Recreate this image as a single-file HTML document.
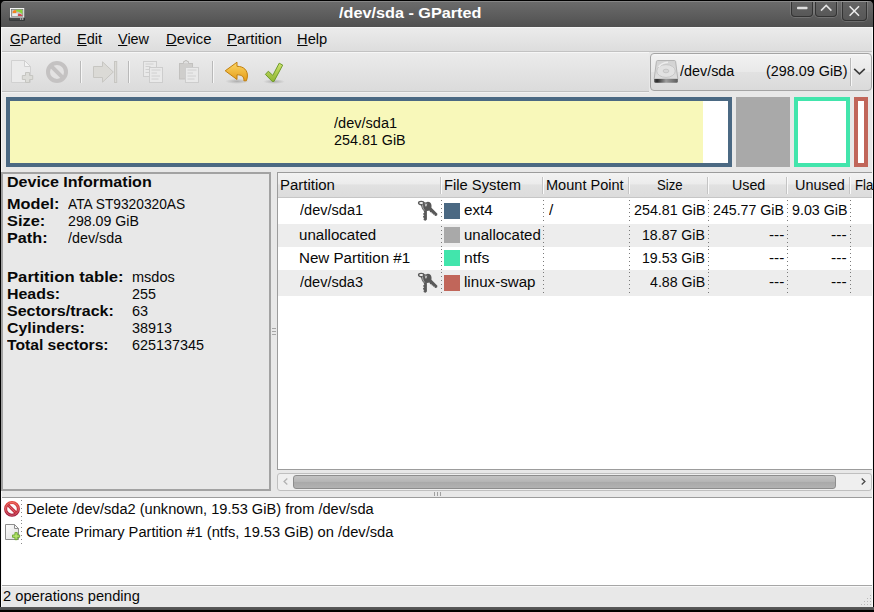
<!DOCTYPE html>
<html><head><meta charset="utf-8"><title>/dev/sda - GParted</title>
<style>
html,body{margin:0;padding:0;background:#000;}
body{width:874px;height:612px;overflow:hidden;font-family:"Liberation Sans",sans-serif;}
#win{position:relative;width:874px;height:612px;overflow:hidden;background:#000;}
#win div,#win span,#win svg{position:absolute;box-sizing:border-box;}
.t{white-space:nowrap;transform-origin:0 0;font-size:14px;line-height:16px;height:16px;color:#080808;}
.t u{text-decoration:underline;text-underline-offset:1px;text-decoration-thickness:1px;}
.b{font-weight:bold;}
#title{left:0;top:0;width:874px;height:27px;border:1px solid #000;border-bottom:0;border-radius:5px 5px 0 0;
 background:linear-gradient(#868686 0,#868686 1px,#6b6b6b 1px,#505050 100%);}
#client{left:1px;top:27px;width:872px;height:580px;background:#e8e8e8;overflow:hidden;}
#bottomframe{left:0;top:607px;width:874px;height:5px;background:linear-gradient(#5a5a5a 0,#4e4e4e 3px,#000 3px,#000 100%);}
#menubar{left:0;top:0;width:872px;height:25px;background:linear-gradient(#f4f4f4 0,#f4f4f4 1px,#ebebeb 1px,#dddddd 100%);border-bottom:1px solid #c2c2c2;}
#toolbar{left:0;top:25px;width:648px;height:40px;background:linear-gradient(#f6f6f6 0,#f6f6f6 1px,#ebebeb 1px,#dbdbdb 100%);border-bottom:1px solid #c0c0c0;box-shadow:0 1px 0 #f2f2f2;}
#combo{left:649px;top:26px;width:222px;height:38px;border:1px solid #a4a4a4;border-radius:4px;background:linear-gradient(#f8f8f8 0,#f1f1f1 2px,#e9e9e9 50%,#e2e2e2 50%,#dadada 100%);}
.sep{width:1px;background:#b9b9b9;box-shadow:1px 0 0 #f6f6f6;}
.pbox{top:70px;height:70px;}
#lpane{left:0;top:145px;width:270px;height:319px;border:2px solid #a2a2a2;border-left-width:2px;background:#e8e8e8;}
#rpane{left:276px;top:145px;width:596px;height:298px;border:1px solid #9c9c9c;border-right:0;background:#fff;}
#hdr{left:0;top:0;width:596px;height:25px;background:linear-gradient(#f3f3f3 0,#ececec 45%,#e1e1e1 50%,#dcdcdc 100%);border-bottom:1px solid #c6c6c6;}
.hsep{top:4px;width:1px;height:17px;background:#c4c4c4;box-shadow:1px 0 0 #fafafa;}
.row{left:0;width:596px;}
.g{background-color:#ededed;}
.sw{width:16px;height:16px;}
#hscroll{left:276px;top:446px;width:595px;height:18px;border:1px solid #bfbfbf;border-radius:3px;background:#efefef;}
#thumb{left:15px;top:1px;width:543px;height:14px;border:1px solid #8d8d8d;border-radius:3px;background:linear-gradient(#c4c4c4,#b4b4b4 50%,#a9a9a9 50%,#b2b2b2);}
#ops{left:0;top:470px;width:872px;height:89px;background:#fff;border-top:1px solid #9c9c9c;border-bottom:1px solid #a6a6a6;}
#status{left:0;top:559px;width:872px;height:21px;background:#e8e8e8;border-top:1px solid #f8f8f8;}
.tb{border:1px solid #333;border-top:0;border-radius:0 0 4px 4px;background:linear-gradient(#636363,#575757);box-shadow:0 0 0 1px rgba(255,255,255,.14);}
.row{background-image:repeating-linear-gradient(#7a7a7a 0,#7a7a7a 1px,transparent 1px,transparent 4px),repeating-linear-gradient(#7a7a7a 0,#7a7a7a 1px,transparent 1px,transparent 4px),repeating-linear-gradient(#7a7a7a 0,#7a7a7a 1px,transparent 1px,transparent 4px),repeating-linear-gradient(#7a7a7a 0,#7a7a7a 1px,transparent 1px,transparent 4px),repeating-linear-gradient(#7a7a7a 0,#7a7a7a 1px,transparent 1px,transparent 4px),repeating-linear-gradient(#7a7a7a 0,#7a7a7a 1px,transparent 1px,transparent 4px);background-repeat:no-repeat;background-size:1px 100%;background-position:163px 2px,265px 2px,351px 2px,430px 2px,509px 2px,572px 2px;}

</style></head>
<body>
<div id="win">
<div id="title"></div>
<div id="client">
 <div id="menubar"></div>
 <div id="toolbar">
  <div class="sep" style="left:79px;top:9px;height:22px"></div>
  <div class="sep" style="left:127px;top:9px;height:22px"></div>
  <div class="sep" style="left:211px;top:9px;height:22px"></div>
 </div>
 <div id="combo">
  <div class="sep" style="left:199px;top:4px;height:28px"></div>
 </div>
 <!-- partition visual -->
 <div class="pbox" style="left:5px;width:726px;background:#fff;border:4px solid #4b6983;"><div style="left:0;top:0;width:693px;height:62px;background:#f8f8ba"></div></div>
 <div class="pbox" style="left:735px;width:54px;background:#a9a9a9;"></div>
 <div class="pbox" style="left:793px;width:56px;background:#fff;border:4px solid #42e5ac;"></div>
 <div class="pbox" style="left:853px;width:14px;background:#fff;border:4px solid #c1665a;"></div>
 <!-- left pane -->
 <div id="lpane"></div>
 <!-- right pane -->
 <div id="rpane">
  <div id="hdr">
   <div class="hsep" style="left:162px"></div>
   <div class="hsep" style="left:264px"></div>
   <div class="hsep" style="left:350px"></div>
   <div class="hsep" style="left:429px"></div>
   <div class="hsep" style="left:508px"></div>
   <div class="hsep" style="left:571px"></div>
  </div>
  <div class="row"   style="top:25px;height:26px"></div>
  <div class="row g" style="top:51px;height:23px"></div>
  <div class="row"   style="top:74px;height:23px"></div>
  <div class="row g" style="top:97px;height:26px"></div>
  <div class="sw" style="left:166px;top:30px;background:#4b6983"></div>
  <div class="sw" style="left:166px;top:54px;background:#a9a9a9"></div>
  <div class="sw" style="left:166px;top:77px;background:#42e5ac"></div>
  <div class="sw" style="left:166px;top:102px;background:#c1665a"></div>
 </div>
 <div id="hscroll"><div id="thumb"></div></div>
 <div id="ops"></div>
 <div id="status"></div>
</div>
<div id="bottomframe"></div>
<!-- title icon -->
<svg style="left:9px;top:8px" width="16" height="13" viewBox="0 0 16 13">
 <rect x="1" y="-0.2" width="14.2" height="10" fill="#fbfbfb"/>
 <rect x="2.3" y="1.3" width="11.6" height="6.9" fill="#c4c6c5" stroke="#6c6f6e" stroke-width="0.7"/>
 <path d="M3.6,5.2 L3.8,3.2 Q5,2 6.6,2 L7.6,3.6 L7,5.2 Z" fill="#f58220"/>
 <path d="M6.6,1.8 L13.4,1.8 L13.4,6.8 Q11.5,3.8 7.6,3.6 Z" fill="#8bd43a"/>
 <path d="M9.2,5.8 Q11,5.4 13.4,7.2 L13.4,8 L9,8 Z" fill="#d8454c"/>
 <path d="M3.2,5.6 L8.6,5.3 L8.6,8 L3.2,8 Z" fill="#ececec"/>
 <rect x="0" y="9.7" width="16" height="3.1" rx="0.8" fill="#2f3335"/>
 <rect x="1" y="10.4" width="14" height="1.1" fill="#5a5e5c"/>
 <rect x="11" y="10.5" width="1.3" height="1" fill="#f2f2f2"/><rect x="13" y="10.5" width="1.3" height="1" fill="#f2f2f2"/>
</svg>
<!-- title buttons -->
<div class="tb" style="left:791px;top:2px;width:22px;height:15px"></div>
<div class="tb" style="left:815px;top:2px;width:22px;height:15px"></div>
<div class="tb" style="left:842px;top:2px;width:25px;height:19px"></div>
<svg style="left:791px;top:0" width="80" height="22" viewBox="0 0 80 22">
 <rect x="6" y="6.7" width="10.5" height="2.6" rx="0.8" fill="#dedede"/>
 <path d="M30,10.6 L35.2,5.4 L40.4,10.6" fill="none" stroke="#e4e4e4" stroke-width="1.5"/>
 <path d="M58.6,6.2 L68,15.8 M68,6.2 L58.6,15.8" fill="none" stroke="#ececec" stroke-width="1.5"/>
</svg>
<!-- toolbar: new (disabled) -->
<svg style="left:11px;top:60px" width="23" height="24" viewBox="0 0 23 24">
 <path d="M0.5,0.5 H13.5 L19.5,6.5 V22.5 H0.5 Z" fill="#ebebeb" stroke="#d1d1d1"/>
 <path d="M13.5,0.5 V6.5 H19.5 Z" fill="#f3f3f3" stroke="#d1d1d1"/>
 <path d="M14.5,12.5 h4 v3 h3.2 v4 h-3.2 v3 h-4 v-3 h-3.2 v-4 h3.2 z" fill="#dcdcd8" stroke="#c5c5c1"/>
</svg>
<!-- toolbar: cancel (disabled) -->
<svg style="left:45px;top:60px" width="24" height="24" viewBox="0 0 24 24">
 <circle cx="12" cy="11.9" r="9" fill="#e3e2e2" stroke="#c4c2c2" stroke-width="4"/>
 <path d="M6,5.9 L18,17.9" stroke="#c4c2c2" stroke-width="4"/>
</svg>
<!-- toolbar: apply-last arrow (disabled) -->
<svg style="left:92px;top:60px" width="26" height="24" viewBox="0 0 26 24">
 <path d="M1.5,6.5 H10.5 V1.8 L21.3,12 L10.5,22.2 V17.5 H1.5 Z" fill="#dbdad6" stroke="#c7c6c2"/>
 <rect x="22.5" y="1.5" width="2.2" height="21" fill="#dbdad6" stroke="#c7c6c2"/>
</svg>
<!-- toolbar: copy (disabled) -->
<svg style="left:143px;top:61px" width="21" height="23" viewBox="0 0 21 23">
 <rect x="0.5" y="0.5" width="13" height="15" fill="#e9e9e9" stroke="#cdcdcd"/>
 <path d="M2.5,3 h8 M2.5,5.5 h5 M2.5,8.5 h3.5 M2.5,11.5 h3.5" stroke="#d0d0d0" stroke-width="1"/>
 <rect x="6.5" y="6.5" width="13" height="15" fill="#e9e9e9" stroke="#cdcdcd"/>
 <path d="M8.5,9 h9 M8.5,12 h5.5 M8.5,15 h8.5 M8.5,18 h7" stroke="#d0d0d0" stroke-width="1"/>
</svg>
<!-- toolbar: paste (disabled) -->
<svg style="left:179px;top:60px" width="21" height="24" viewBox="0 0 21 24">
 <rect x="0.5" y="3.5" width="13" height="15.5" fill="#cfcecc" stroke="#c2c1bf"/>
 <path d="M4.5,3.5 v-2 h1.5 v-1 h2 v1 h1.5 v2" fill="#e0e0e0" stroke="#c2c1bf"/>
 <rect x="6.5" y="7.5" width="13" height="15" fill="#e9e9e9" stroke="#cdcdcd"/>
 <path d="M8.5,10 h9 M8.5,13 h5.5 M8.5,16 h8.5 M8.5,19 h7" stroke="#d0d0d0" stroke-width="1"/>
</svg>
<!-- toolbar: undo -->
<svg style="left:222px;top:59px" width="30" height="26" viewBox="0 0 30 26">
 <defs><linearGradient id="gu" x1="0" y1="0" x2="0" y2="1"><stop offset="0" stop-color="#fcd766"/><stop offset="1" stop-color="#e59c18"/></linearGradient>
 <radialGradient id="sh"><stop offset="0" stop-color="#000" stop-opacity=".22"/><stop offset="1" stop-color="#000" stop-opacity="0"/></radialGradient></defs>
 <ellipse cx="15" cy="22.3" rx="12" ry="2.6" fill="url(#sh)"/>
 <path d="M3.2,11.8 L15,3.2 L15,7.3 C22,7.3 25.6,11.5 25.4,17 C25.3,19 25,20.5 24.3,21.8 L21.9,21.8 C22.2,17.5 19.8,15.8 15,15.8 L15,20.5 Z" fill="url(#gu)" stroke="#c17f0e" stroke-width="1" stroke-linejoin="round"/>
</svg>
<!-- toolbar: apply -->
<svg style="left:260px;top:59px" width="28" height="26" viewBox="0 0 28 26">
 <defs><linearGradient id="ga" x1="0" y1="0" x2="0" y2="1"><stop offset="0" stop-color="#cfe46e"/><stop offset="1" stop-color="#8fb533"/></linearGradient></defs>
 <ellipse cx="14" cy="22.6" rx="11" ry="2.4" fill="url(#sh)"/>
 <path d="M5.4,15.4 L8.3,12.2 L12.8,16.4 L19.2,4.2 L22.7,6.1 L14,22.4 L12.2,22.4 Z" fill="url(#ga)" stroke="#6e9b2b" stroke-width="1" stroke-linejoin="round"/>
</svg>
<!-- combo hdd -->
<svg style="left:653px;top:59px" width="26" height="25" viewBox="0 0 26 25">
 <defs><linearGradient id="gh" x1="0" y1="0" x2="1" y2="0"><stop offset="0" stop-color="#505050"/><stop offset=".12" stop-color="#2c2c2c"/><stop offset=".5" stop-color="#9c9c9c"/><stop offset="1" stop-color="#5c5c5c"/></linearGradient>
 <linearGradient id="gt" x1="0" y1="0" x2="0" y2="1"><stop offset="0" stop-color="#d2d2d2"/><stop offset="1" stop-color="#dedede"/></linearGradient></defs>
 <path d="M4.6,1.5 H21.4 Q22.4,1.5 22.6,2.5 L24.8,20 H1.2 L3.4,2.5 Q3.6,1.5 4.6,1.5 Z" fill="url(#gt)" stroke="#b4b4b4"/>
 <ellipse cx="13" cy="12" rx="9.3" ry="6.4" fill="#e2e2e2" stroke="#c6c6c6"/>
 <path d="M5.5,8 Q9,3.5 15,3.2" fill="none" stroke="#ededed" stroke-width="1.4"/>
 <ellipse cx="13" cy="12" rx="2.9" ry="1.8" fill="#d6d6d6" stroke="#c6c6c6"/>
 <path d="M1.2,20 H24.8 V22.6 Q24.8,23.8 23.6,23.8 H2.4 Q1.2,23.8 1.2,22.6 Z" fill="url(#gh)"/>
</svg>
<!-- combo arrow -->
<svg style="left:853px;top:67px" width="13" height="9" viewBox="0 0 13 9">
 <path d="M1.2,1.8 L6.5,6.8 L11.8,1.8" fill="none" stroke="#3c3c3c" stroke-width="1.6"/>
</svg>
<!-- keys -->
<svg style="left:416px;top:199px" width="24" height="24" viewBox="0 0 24 24">
 <path d="M5,6.4 Q4.8,3.4 8.2,3.2 L10,3.4 Q11.5,2.5 13.3,3.1 Q15.8,4.4 15.5,7.8 Q15.3,10.6 13.6,11.4 L11,12 L7.8,11.7 Q5.6,10 5,6.4 Z" fill="#585858"/>
 <path d="M7.5,11.4 L10.9,11.4 L10.9,20.6 L9.6,21.8 L8,21.3 L7.4,20.1 L8.3,19.3 L7.1,18.3 L7.1,17 L8.3,16.5 L7.3,15.5 L7.3,14.2 L8.3,13.7 Z" fill="#595959"/>
 <path d="M12.8,10 L15.2,8.4 L21.4,14.7 L21.2,16.2 L19.9,17 L18.7,16.8 L18.6,15.6 L17.3,15.7 L17.1,14.4 L15.8,14.5 L15.6,13.2 L14.2,13.2 Z" fill="#595959"/>
 <ellipse cx="5.2" cy="4.05" rx="2.6" ry="1.7" fill="#f6f6f6" stroke="#5a5a5a" stroke-width="1.4"/>
 <path d="M9.1,4.4 L9.9,7.3 L10.9,4.6" fill="none" stroke="#dcdcdc" stroke-width="0.8"/>
 <path d="M6.5,5.6 L7.1,9.6 L8.6,10.9" fill="none" stroke="#e4e4e4" stroke-width="0.6"/>
</svg>
<svg style="left:416px;top:271px" width="24" height="24" viewBox="0 0 24 24">
 <path d="M5,6.4 Q4.8,3.4 8.2,3.2 L10,3.4 Q11.5,2.5 13.3,3.1 Q15.8,4.4 15.5,7.8 Q15.3,10.6 13.6,11.4 L11,12 L7.8,11.7 Q5.6,10 5,6.4 Z" fill="#585858"/>
 <path d="M7.5,11.4 L10.9,11.4 L10.9,20.6 L9.6,21.8 L8,21.3 L7.4,20.1 L8.3,19.3 L7.1,18.3 L7.1,17 L8.3,16.5 L7.3,15.5 L7.3,14.2 L8.3,13.7 Z" fill="#595959"/>
 <path d="M12.8,10 L15.2,8.4 L21.4,14.7 L21.2,16.2 L19.9,17 L18.7,16.8 L18.6,15.6 L17.3,15.7 L17.1,14.4 L15.8,14.5 L15.6,13.2 L14.2,13.2 Z" fill="#595959"/>
 <ellipse cx="5.2" cy="4.05" rx="2.6" ry="1.7" fill="#f6f6f6" stroke="#5a5a5a" stroke-width="1.4"/>
 <path d="M9.1,4.4 L9.9,7.3 L10.9,4.6" fill="none" stroke="#dcdcdc" stroke-width="0.8"/>
 <path d="M6.5,5.6 L7.1,9.6 L8.6,10.9" fill="none" stroke="#e4e4e4" stroke-width="0.6"/>
</svg>
<!-- ops: delete -->
<svg style="left:3px;top:500px" width="18" height="18" viewBox="0 0 18 18">
 <defs><linearGradient id="gd" x1="0" y1="0" x2="0" y2="1"><stop offset="0" stop-color="#e4473f"/><stop offset="1" stop-color="#a0183c"/></linearGradient></defs>
 <circle cx="9" cy="8.9" r="6.4" fill="#fbfbfb" stroke="url(#gd)" stroke-width="3.1"/>
 <path d="M4.8,4.7 L13.2,13.1" stroke="#c42d3d" stroke-width="3"/>
 <circle cx="9" cy="8.9" r="6.4" fill="none" stroke="#f0908a" stroke-opacity=".6" stroke-width="1"/>
 <path d="M5.6,5.5 L12.4,12.3" stroke="#f0908a" stroke-opacity=".6" stroke-width="1"/>
</svg>
<!-- ops: new -->
<svg style="left:5px;top:524px" width="16" height="17" viewBox="0 0 16 17">
 <defs><linearGradient id="gp" x1="0" y1="0" x2="1" y2="1"><stop offset="0" stop-color="#ffffff"/><stop offset="1" stop-color="#dcdcdc"/></linearGradient></defs>
 <path d="M0.5,0.5 H9.5 L13.5,4.5 V15.5 H0.5 Z" fill="url(#gp)" stroke="#8e8e8e"/>
 <path d="M9.5,0.5 V4.5 H13.5 Z" fill="#f6f6f6" stroke="#8e8e8e" stroke-linejoin="round"/>
 <path d="M9.9,8.6 h2.4 v2.35 h2.35 v2.4 h-2.35 v2.35 h-2.4 v-2.35 h-2.35 v-2.4 h2.35 z" fill="#b2e36a" stroke="#5f9a22" stroke-width="0.8"/>
</svg>
<!-- scroll arrows -->
<svg style="left:282px;top:478px" width="7" height="8" viewBox="0 0 7 8"><path d="M5.3,0.6 L2.1,3.5 L5.3,6.4" fill="none" stroke="#b2b2b2" stroke-width="1.3"/></svg>
<svg style="left:860px;top:478px" width="7" height="8" viewBox="0 0 7 8"><path d="M1.7,0.6 L4.9,3.5 L1.7,6.4" fill="none" stroke="#4a4a4a" stroke-width="1.3"/></svg>
<!-- pane handles -->
<div style="left:272px;top:328px;width:4px;height:1px;background:#a6a6a6"></div>
<div style="left:272px;top:331px;width:4px;height:1px;background:#a6a6a6"></div>
<div style="left:272px;top:334px;width:4px;height:1px;background:#a6a6a6"></div>
<div style="left:434px;top:492px;width:1px;height:4px;background:#a0a0a0"></div>
<div style="left:437px;top:492px;width:1px;height:4px;background:#a0a0a0"></div>
<div style="left:440px;top:492px;width:1px;height:4px;background:#a0a0a0"></div>
<!-- resize grip -->
<svg style="left:860px;top:594px" width="13" height="13" viewBox="0 0 13 13" shape-rendering="crispEdges">
 <g fill="#b9b9b9"><rect x="10" y="1" width="1" height="1"/><rect x="7" y="4" width="1" height="1"/><rect x="10" y="4" width="1" height="1"/>
 <rect x="4" y="7" width="1" height="1"/><rect x="7" y="7" width="1" height="1"/><rect x="10" y="7" width="1" height="1"/>
 <rect x="1" y="10" width="1" height="1"/><rect x="4" y="10" width="1" height="1"/><rect x="7" y="10" width="1" height="1"/><rect x="10" y="10" width="1" height="1"/></g>
</svg>
<!-- ops dotted lines -->
<div style="left:21px;top:500px;width:1px;height:21px;background:repeating-linear-gradient(#8a8a8a 0,#8a8a8a 1px,transparent 1px,transparent 4px)"></div>
<div style="left:21px;top:523px;width:1px;height:21px;background:repeating-linear-gradient(#8a8a8a 0,#8a8a8a 1px,transparent 1px,transparent 4px)"></div>
<div style="left:1px;top:27px;width:1px;height:145px;background:#f4f4f4"></div>
<div style="left:1px;top:491px;width:1px;height:116px;background:#f6f6f6"></div>
<div style="left:872px;top:27px;width:1px;height:580px;background:#f6f6f6"></div>

<!-- text layer -->
<span class="t b" style="left:338.50px;top:5.00px;transform:scaleX(1.1587);color:#ffffff;">/dev/sda - GParted</span>
<span class="t" style="left:10.15px;top:31.00px;transform:scaleX(0.9754);"><u>G</u>Parted</span>
<span class="t" style="left:76.58px;top:31.00px;transform:scaleX(1.0383);"><u>E</u>dit</span>
<span class="t" style="left:118.04px;top:31.00px;transform:scaleX(1.0310);"><u>V</u>iew</span>
<span class="t" style="left:165.55px;top:31.00px;transform:scaleX(1.0603);"><u>D</u>evice</span>
<span class="t" style="left:226.54px;top:31.00px;transform:scaleX(1.0666);"><u>P</u>artition</span>
<span class="t" style="left:296.56px;top:31.00px;transform:scaleX(1.0494);"><u>H</u>elp</span>
<span class="t" style="left:680.08px;top:63.00px;transform:scaleX(1.0261);">/dev/sda</span>
<span class="t" style="left:765.50px;top:63.00px;transform:scaleX(1.0263);">(298.09 GiB)</span>
<span class="t" style="left:334.08px;top:115.00px;transform:scaleX(1.0385);">/dev/sda1</span>
<span class="t" style="left:333.64px;top:132.00px;transform:scaleX(1.0233);">254.81 GiB</span>
<span class="t b" style="left:6.69px;top:174.00px;transform:scaleX(1.1487);">Device Information</span>
<span class="t b" style="left:6.68px;top:196.00px;transform:scaleX(1.1629);">Model:</span>
<span class="t" style="left:68.05px;top:196.00px;transform:scaleX(0.9821);">ATA ST9320320AS</span>
<span class="t b" style="left:6.90px;top:213.00px;transform:scaleX(1.1700);">Size:</span>
<span class="t" style="left:67.85px;top:213.00px;transform:scaleX(1.0117);">298.09 GiB</span>
<span class="t b" style="left:6.68px;top:230.00px;transform:scaleX(1.1583);">Path:</span>
<span class="t" style="left:68.09px;top:230.00px;transform:scaleX(1.0223);">/dev/sda</span>
<span class="t b" style="left:6.66px;top:269.00px;transform:scaleX(1.1899);">Partition table:</span>
<span class="t" style="left:131.86px;top:269.00px;transform:scaleX(1.0380);">msdos</span>
<span class="t b" style="left:6.70px;top:286.00px;transform:scaleX(1.1373);">Heads:</span>
<span class="t" style="left:132.04px;top:286.00px;transform:scaleX(1.0220);">255</span>
<span class="t b" style="left:6.92px;top:303.00px;transform:scaleX(1.1444);">Sectors/track:</span>
<span class="t" style="left:132.00px;top:303.00px;transform:scaleX(1.0356);">63</span>
<span class="t b" style="left:6.95px;top:320.00px;transform:scaleX(1.1351);">Cylinders:</span>
<span class="t" style="left:132.03px;top:320.00px;transform:scaleX(1.0277);">38913</span>
<span class="t b" style="left:7.39px;top:337.00px;transform:scaleX(1.1191);">Total sectors:</span>
<span class="t" style="left:132.01px;top:337.00px;transform:scaleX(1.0265);">625137345</span>
<span class="t" style="left:279.74px;top:177.00px;transform:scaleX(1.0686);">Partition</span>
<span class="t" style="left:443.56px;top:177.00px;transform:scaleX(1.0520);">File System</span>
<span class="t" style="left:545.77px;top:177.00px;transform:scaleX(1.0395);">Mount Point</span>
<span class="t" style="left:656.56px;top:177.00px;transform:scaleX(0.9398);">Size</span>
<span class="t" style="left:731.94px;top:177.00px;transform:scaleX(1.0186);">Used</span>
<span class="t" style="left:794.73px;top:177.00px;transform:scaleX(1.0312);">Unused</span>
<span class="t" style="left:854.80px;top:177.00px;transform:scaleX(0.9393);">Fla</span>
<span class="t" style="left:300.08px;top:202.00px;transform:scaleX(1.0385);">/dev/sda1</span>
<span class="t" style="left:464.08px;top:202.00px;transform:scaleX(1.0881);">ext4</span>
<span class="t" style="left:548.56px;top:202.00px;transform:scaleX(1.0991);">/</span>
<span class="t" style="left:633.64px;top:202.00px;transform:scaleX(1.0204);">254.81 GiB</span>
<span class="t" style="left:712.95px;top:202.00px;transform:scaleX(1.0131);">245.77 GiB</span>
<span class="t" style="left:791.62px;top:202.00px;transform:scaleX(1.0173);">9.03 GiB</span>
<span class="t" style="left:299.47px;top:227.00px;transform:scaleX(1.0780);">unallocated</span>
<span class="t" style="left:463.88px;top:227.00px;transform:scaleX(1.0723);">unallocated</span>
<span class="t" style="left:642.25px;top:227.00px;transform:scaleX(1.0096);">18.87 GiB</span>
<span class="t" style="left:768.65px;top:227.00px;transform:scaleX(1.0901);">---</span>
<span class="t" style="left:831.44px;top:227.00px;transform:scaleX(1.1136);">---</span>
<span class="t" style="left:299.02px;top:250.00px;transform:scaleX(1.0820);">New Partition #1</span>
<span class="t" style="left:463.79px;top:250.00px;transform:scaleX(1.1225);">ntfs</span>
<span class="t" style="left:642.25px;top:250.00px;transform:scaleX(1.0096);">19.53 GiB</span>
<span class="t" style="left:768.65px;top:250.00px;transform:scaleX(1.0901);">---</span>
<span class="t" style="left:831.44px;top:250.00px;transform:scaleX(1.1136);">---</span>
<span class="t" style="left:300.08px;top:274.00px;transform:scaleX(1.0384);">/dev/sda3</span>
<span class="t" style="left:463.85px;top:274.00px;transform:scaleX(1.0812);">linux-swap</span>
<span class="t" style="left:649.98px;top:274.00px;transform:scaleX(1.0125);">4.88 GiB</span>
<span class="t" style="left:768.65px;top:274.00px;transform:scaleX(1.0901);">---</span>
<span class="t" style="left:831.44px;top:274.00px;transform:scaleX(1.1136);">---</span>
<span class="t" style="left:26.07px;top:501.00px;transform:scaleX(1.0438);">Delete /dev/sda2 (unknown, 19.53 GiB) from /dev/sda</span>
<span class="t" style="left:26.19px;top:524.00px;transform:scaleX(1.0469);">Create Primary Partition #1 (ntfs, 19.53 GiB) on /dev/sda</span>
<span class="t" style="left:3.42px;top:588.00px;transform:scaleX(1.0470);">2 operations pending</span>
</div>
</body></html>
